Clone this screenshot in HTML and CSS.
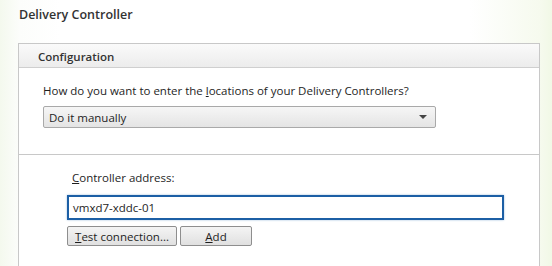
FILE: index.html
```html
<!DOCTYPE html>
<html lang="en">
<head>
    <meta charset="UTF-8">
    <title>Delivery Controller</title>
    <link rel="stylesheet" href="styles.css">
</head>
<body>
    <h1 class="title">Delivery Controller</h1>

    <div class="panel">
        <div class="panel-head">Configuration</div>

        <div class="section">
            <p class="question">How do you want to enter the <u>l</u>ocations of your Delivery Controllers?</p>
            <div class="select">
                <span>Do it manually</span>
                <span class="arrow"></span>
            </div>
        </div>

        <div class="section second">
            <p class="label"><u>C</u>ontroller address:</p>
            <div class="address">vmxd7-xddc-01</div>
            <div class="buttons">
                <button class="btn test"><u>T</u>est connection...</button>
                <button class="btn add"><u>A</u>dd</button>
            </div>
        </div>
    </div>
</body>
</html>
```

FILE: styles.css
```css
*{
    margin: 0;
    padding: 0;
    box-sizing: border-box;
}

body{
    width: 552px;
    height: 266px;
    overflow: hidden;
    font-family: "Open Sans", "Noto Sans", sans-serif;
    font-size: 11.5px;
    color: #1e1e1e;
    background: linear-gradient(to right, #f4f9ee 0px, #fcfdfb 20px, #fff 60px, #fff 470px, #f6faee 540px, #f1f8e6 552px);
}

.title{
    font-size: 12.5px;
    font-weight: 600;
    color: #333;
    height: 43px;
    padding: 6px 0 0 19px;
}

.panel{
    margin-left: 18px;
    width: 522px;
    height: 223px;
    border: 1px solid #c8c8c8;
    border-bottom: none;
    background: #fff;
}

.panel-head{
    height: 24px;
    line-height: 26px;
    padding-left: 19px;
    font-weight: 600;
    color: #333;
    background: linear-gradient(#fafafa, #ececec);
    border-bottom: 1px solid #cfcfcf;
}

.section{
    padding: 14px 0 0 24px;
    height: 87px;
    border-bottom: 1px solid #c8c8c8;
}

.question{
    line-height: 18px;
    margin-bottom: 6px;
}

.select{
    width: 393px;
    height: 22px;
    border: 1px solid #a9a9a9;
    border-radius: 2px;
    background: linear-gradient(#f6f6f6, #e4e4e4);
    display: flex;
    align-items: center;
    justify-content: space-between;
    padding: 0 8px 0 5px;
}

.arrow{
    width: 0;
    height: 0;
    border-left: 4px solid transparent;
    border-right: 4px solid transparent;
    border-top: 4px solid #444;
}

.second{
    border-bottom: none;
    padding: 14px 0 0 48px;
}

.label{
    line-height: 18px;
    padding-left: 5px;
    margin-bottom: 8px;
}

.address{
    width: 437px;
    height: 25px;
    border: 2px solid #1c5fa5;
    box-shadow: 0 0 2px #9fbede;
    padding: 0 4px;
    line-height: 21px;
}

.buttons{
    display: flex;
    gap: 3px;
    margin-top: 6px;
}

.btn{
    font-family: inherit;
    font-size: 11.5px;
    color: #1e1e1e;
    height: 20px;
    border: 1px solid #8e8e8e;
    border-radius: 2px;
    background: linear-gradient(#f4f4f4, #e0e0e0);
}

.test{
    width: 110px;
}

.add{
    width: 72px;
}
```
